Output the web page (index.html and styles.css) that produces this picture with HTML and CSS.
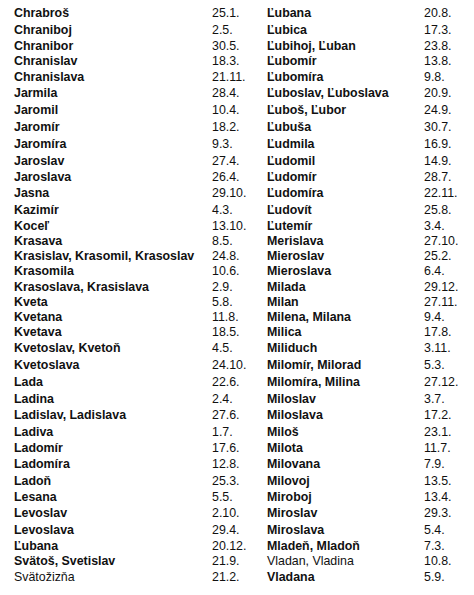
FILE: index.html
```html
<!DOCTYPE html>
<html lang="sk">
<head>
<meta charset="utf-8">
<title>Mená</title>
<link rel="stylesheet" href="styles.css">
</head>
<body>
<div class="list">
<span class="n">Chrabroš</span><span class="d">25.1.</span><span class="n">Ľubana</span><span class="d">20.8.</span>
<span class="n">Chraniboj</span><span class="d">2.5.</span><span class="n">Ľubica</span><span class="d">17.3.</span>
<span class="n">Chranibor</span><span class="d">30.5.</span><span class="n">Ľubihoj, Ľuban</span><span class="d">23.8.</span>
<span class="n">Chranislav</span><span class="d">18.3.</span><span class="n">Ľubomír</span><span class="d">13.8.</span>
<span class="n">Chranislava</span><span class="d">21.11.</span><span class="n">Ľubomíra</span><span class="d">9.8.</span>
<span class="n">Jarmila</span><span class="d">28.4.</span><span class="n">Ľuboslav, Ľuboslava</span><span class="d">20.9.</span>
<span class="n">Jaromil</span><span class="d">10.4.</span><span class="n">Ľuboš, Ľubor</span><span class="d">24.9.</span>
<span class="n">Jaromír</span><span class="d">18.2.</span><span class="n">Ľubuša</span><span class="d">30.7.</span>
<span class="n">Jaromíra</span><span class="d">9.3.</span><span class="n">Ľudmila</span><span class="d">16.9.</span>
<span class="n">Jaroslav</span><span class="d">27.4.</span><span class="n">Ľudomil</span><span class="d">14.9.</span>
<span class="n">Jaroslava</span><span class="d">26.4.</span><span class="n">Ľudomír</span><span class="d">28.7.</span>
<span class="n">Jasna</span><span class="d">29.10.</span><span class="n">Ľudomíra</span><span class="d">22.11.</span>
<span class="n">Kazimír</span><span class="d">4.3.</span><span class="n">Ľudovít</span><span class="d">25.8.</span>
<span class="n">Koceľ</span><span class="d">13.10.</span><span class="n">Ľutemír</span><span class="d">3.4.</span>
<span class="n">Krasava</span><span class="d">8.5.</span><span class="n">Merislava</span><span class="d">27.10.</span>
<span class="n">Krasislav, Krasomil, Krasoslav</span><span class="d">24.8.</span><span class="n">Mieroslav</span><span class="d">25.2.</span>
<span class="n">Krasomila</span><span class="d">10.6.</span><span class="n">Mieroslava</span><span class="d">6.4.</span>
<span class="n">Krasoslava, Krasislava</span><span class="d">2.9.</span><span class="n">Milada</span><span class="d">29.12.</span>
<span class="n">Kveta</span><span class="d">5.8.</span><span class="n">Milan</span><span class="d">27.11.</span>
<span class="n">Kvetana</span><span class="d">11.8.</span><span class="n">Milena, Milana</span><span class="d">9.4.</span>
<span class="n">Kvetava</span><span class="d">18.5.</span><span class="n">Milica</span><span class="d">17.8.</span>
<span class="n">Kvetoslav, Kvetoň</span><span class="d">4.5.</span><span class="n">Miliduch</span><span class="d">3.11.</span>
<span class="n">Kvetoslava</span><span class="d">24.10.</span><span class="n">Milomír, Milorad</span><span class="d">5.3.</span>
<span class="n">Lada</span><span class="d">22.6.</span><span class="n">Milomíra, Milina</span><span class="d">27.12.</span>
<span class="n">Ladina</span><span class="d">2.4.</span><span class="n">Miloslav</span><span class="d">3.7.</span>
<span class="n">Ladislav, Ladislava</span><span class="d">27.6.</span><span class="n">Miloslava</span><span class="d">17.2.</span>
<span class="n">Ladiva</span><span class="d">1.7.</span><span class="n">Miloš</span><span class="d">23.1.</span>
<span class="n">Ladomír</span><span class="d">17.6.</span><span class="n">Milota</span><span class="d">11.7.</span>
<span class="n">Ladomíra</span><span class="d">12.8.</span><span class="n">Milovana</span><span class="d">7.9.</span>
<span class="n">Ladoň</span><span class="d">25.3.</span><span class="n">Milovoj</span><span class="d">13.5.</span>
<span class="n">Lesana</span><span class="d">5.5.</span><span class="n">Miroboj</span><span class="d">13.4.</span>
<span class="n">Levoslav</span><span class="d">2.10.</span><span class="n">Miroslav</span><span class="d">29.3.</span>
<span class="n">Levoslava</span><span class="d">29.4.</span><span class="n">Miroslava</span><span class="d">5.4.</span>
<span class="n">Ľubana</span><span class="d">20.12.</span><span class="n">Mladeň, Mladoň</span><span class="d">7.3.</span>
<span class="n">Svätoš, Svetislav</span><span class="d">21.9.</span><span class="n plain">Vladan, Vladina</span><span class="d">10.8.</span>
<span class="n plain">Svätožizňa</span><span class="d">21.2.</span><span class="n">Vladana</span><span class="d">5.9.</span>
</div>
</body>
</html>
```
FILE: styles.css
```css
html, body {
  margin: 0;
  padding: 0;
  background: #ffffff;
}
body {
  font-family: "Liberation Sans", Arial, sans-serif;
  font-size: 12.4px;
  color: #111111;
}
.list {
  display: grid;
  grid-template-columns: 198px 55px 157px 1fr;
  grid-template-rows: 17px 17px 15px 15px 16px 17px 17px 16px 18px 17px 15px 17px 17px 15px 15px 15px 15px 16px 15px 14px 16px 16px 18px 17px 16px 17px 17px 15px 17px 16px 16px 17px 17px 15px 15px 16px;
  padding: 5px 0 0 14px;
  align-items: center;
}
.n {
  font-weight: bold;
  white-space: nowrap;
  line-height: 1;
}
.n.plain {
  font-weight: normal;
}
.d {
  line-height: 1;
  white-space: nowrap;
}
```
